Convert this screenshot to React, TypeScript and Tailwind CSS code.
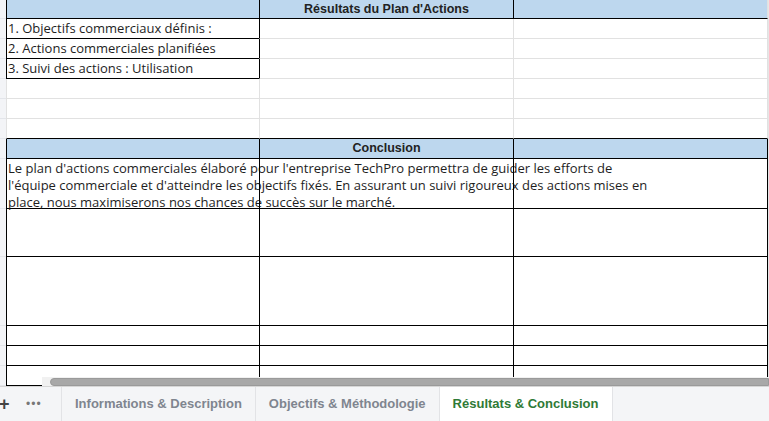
import React from 'react';

type Edge = 'k' | 'g' | 'n';

const LEFT: Record<Edge, string> = {
  k: 'border-l border-l-black',
  g: 'border-l border-l-[#e1e1e1]',
  n: '',
};
const BOTTOM: Record<Edge, string> = {
  k: 'border-b border-b-black',
  g: 'border-b border-b-[#e1e1e1]',
  n: '',
};
const RIGHT: Record<Edge, string> = {
  k: 'border-r border-r-black',
  g: 'border-r border-r-[#e1e1e1]',
  n: '',
};

type CellSpec = { l: Edge; b: Edge; r?: Edge };

type Row = {
  h: number;
  cells: [CellSpec, CellSpec, CellSpec];
  head?: boolean;
  a?: React.ReactNode;
  b?: React.ReactNode;
};

const uiFont = { fontFamily: '"Liberation Sans", Arial, sans-serif' };
const cellFont = { fontFamily: '"Open Sans", "Liberation Sans", sans-serif' };

const boxA: Row['cells'] = [
  { l: 'k', b: 'k' },
  { l: 'k', b: 'g' },
  { l: 'g', b: 'g', r: 'g' },
];
const plain: Row['cells'] = [
  { l: 'g', b: 'g' },
  { l: 'g', b: 'g' },
  { l: 'g', b: 'g', r: 'g' },
];
const plainBlackBottom: Row['cells'] = [
  { l: 'g', b: 'k' },
  { l: 'g', b: 'k' },
  { l: 'g', b: 'k', r: 'g' },
];
const allBlack: Row['cells'] = [
  { l: 'k', b: 'k' },
  { l: 'k', b: 'k' },
  { l: 'k', b: 'k', r: 'k' },
];

const conclusion = [
  "Le plan d'actions commerciales élaboré pour l'entreprise TechPro permettra de guider les efforts de",
  "l'équipe commerciale et d'atteindre les objectifs fixés. En assurant un suivi rigoureux des actions mises en",
  'place, nous maximiserons nos chances de succès sur le marché.',
];

const rows: Row[] = [
  {
    h: 19,
    head: true,
    cells: [
      { l: 'k', b: 'k' },
      { l: 'k', b: 'k' },
      { l: 'k', b: 'k', r: 'g' },
    ],
    b: "Résultats du Plan d'Actions",
  },
  { h: 20, cells: boxA, a: '1. Objectifs commerciaux définis :' },
  { h: 20, cells: boxA, a: '2. Actions commerciales planifiées' },
  { h: 20, cells: boxA, a: '3. Suivi des actions : Utilisation' },
  { h: 20, cells: plain },
  { h: 20, cells: plain },
  { h: 20, cells: plainBlackBottom },
  { h: 20, head: true, cells: allBlack, b: 'Conclusion' },
  {
    h: 50,
    cells: allBlack,
    a: (
      <div className="pt-px leading-[17px] whitespace-nowrap">
        {conclusion.map((line) => (
          <div key={line}>{line}</div>
        ))}
      </div>
    ),
  },
  { h: 48, cells: allBlack },
  { h: 69, cells: allBlack },
  { h: 20, cells: allBlack },
  { h: 20, cells: allBlack },
  { h: 20, cells: allBlack },
];

const widths = ['w-[253px]', 'w-[254px]', 'w-[255px]'];

function SheetRow({ row }: { row: Row }) {
  return (
    <div className="flex shrink-0" style={{ height: row.h }}>
      <div className="w-[6px] shrink-0 bg-[#f3f4f7] border-b border-b-[#e3e5ea]" />
      {row.cells.map((c, i) => (
        <div
          key={i}
          className={[
            widths[i],
            'shrink-0 h-full',
            LEFT[c.l],
            BOTTOM[c.b],
            c.r ? RIGHT[c.r] : '',
            row.head ? 'bg-[#bdd7ee]' : '',
            i === 0 ? 'overflow-visible' : '',
          ].join(' ')}
        >
          {i === 0 && row.a && (
            typeof row.a === 'string' ? (
              <div className="pl-px leading-[19px] whitespace-nowrap">{row.a}</div>
            ) : (
              <div className="pl-px">{row.a}</div>
            )
          )}
          {i === 1 && row.b && (
            <div className="text-center font-bold leading-[18px] text-[12.5px] text-[#222]" style={uiFont}>
              {row.b}
            </div>
          )}
        </div>
      ))}
      <div className="w-px shrink-0 bg-[#e6e6e6]" />
    </div>
  );
}

function Tab({ label, active }: { label: string; active?: boolean }) {
  return (
    <div
      className={
        'h-full flex items-center px-[13px] border-r border-r-[#e2e3e6] text-[13px] font-bold ' +
        (active ? 'bg-white text-[#2f7a36]' : 'text-[#7f858f]')
      }
    >
      {label}
    </div>
  );
}

export default function App() {
  return (
    <div className="w-[769px] h-[421px] bg-white flex flex-col overflow-hidden text-[#1e1e1e]" style={uiFont}>
      <div className="relative h-[386px] overflow-hidden text-[13px]" style={cellFont}>
        {rows.map((r, i) => (
          <SheetRow key={i} row={r} />
        ))}
        {/* horizontal scrollbar */}
        <div className="absolute left-[42px] right-0 top-[377px] h-[9px] bg-[#f1f1f1] flex items-center">
          <div className="ml-[8px] flex-1 h-[8px] rounded-l-full bg-[#a8a8a8] border border-[#9a9a9a]" />
        </div>
      </div>
      <div className="flex-1 flex items-stretch bg-[#f4f5f7] border-t border-t-[#d6d6d6]">
        <div className="w-[62px] shrink-0 flex items-center border-r border-r-[#e2e3e6]">
          <span className="text-[#444] text-[18px] font-bold leading-none -ml-[1px] w-[10px]">+</span>
          <span className="ml-[17px] text-[#777] text-[12px] tracking-[1px] leading-none">•••</span>
        </div>
        <Tab label="Informations & Description" />
        <Tab label="Objectifs & Méthodologie" />
        <Tab label="Résultats & Conclusion" active />
      </div>
    </div>
  );
}
